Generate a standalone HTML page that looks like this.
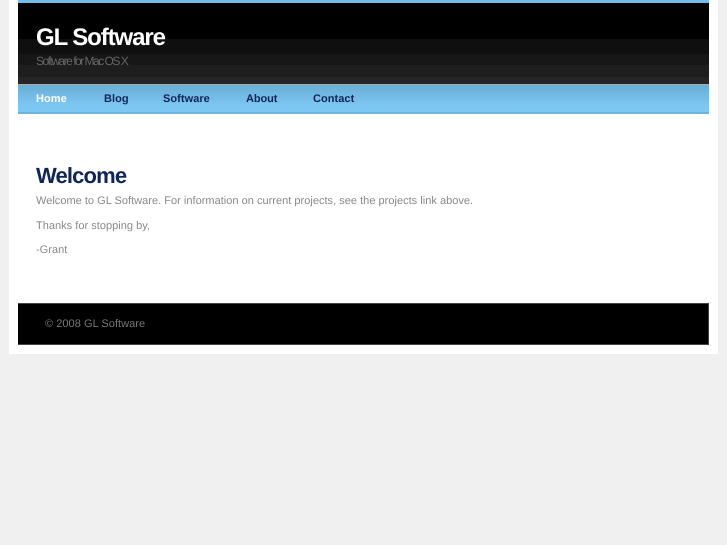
<!DOCTYPE html>
<html>
<head>
<meta charset="utf-8">
<style>
html,body{margin:0;padding:0;background:#f0f0f0;}
body{width:727px;height:545px;overflow:hidden;position:relative;font-family:"Liberation Sans",sans-serif;text-rendering:geometricPrecision;}
#wrap{position:absolute;left:9px;top:0;width:709px;height:354px;background:#fff;}
.abs{position:absolute;white-space:nowrap;}
#head{position:absolute;left:18px;top:0;width:691px;height:85px;background:#000;}
.band{position:absolute;left:0;width:691px;}
#nav{position:absolute;left:18px;top:85px;width:691px;height:27px;background:linear-gradient(#69aed6,#7cc6f2 75%,#7fc8f4);border-bottom:2px solid #6db3de;}
#foot{position:absolute;left:18px;top:303px;width:691px;height:42px;background:#000;box-sizing:border-box;border:1px solid #444;border-width:1px 1px 1px 0;}
.n{position:absolute;top:92px;font-size:11px;font-weight:bold;letter-spacing:.05px;color:#0f2557;line-height:14px;white-space:nowrap;}
.p{position:absolute;left:36px;font-size:11px;letter-spacing:.02px;color:#888;line-height:14px;white-space:nowrap;}
</style>
</head>
<body>
<div id="wrap"></div>
<div id="head">
<div class="band" style="top:0;height:3px;background:#74bdeb"></div>
<div class="band" style="top:39px;height:15px;background:#0f0f0f"></div>
<div class="band" style="top:54px;height:11px;background:#171717"></div>
<div class="band" style="top:65px;height:12px;background:#1e1e1e"></div>
<div class="band" style="top:77px;height:7px;background:#252525"></div>
<div class="band" style="top:84px;height:1px;background:#a9adb0"></div>
</div>
<div class="abs" style="left:36px;top:23px;font-size:24px;font-weight:bold;letter-spacing:-1.1px;color:#fff;line-height:30px;">GL Software</div>
<div class="abs" style="left:36px;top:54px;font-size:12px;letter-spacing:-1.5px;color:#666;line-height:15px;">Software for Mac OS X</div>
<div id="nav"></div>
<div class="n" style="left:36px;color:#fff">Home</div>
<div class="n" style="left:104px">Blog</div>
<div class="n" style="left:163px">Software</div>
<div class="n" style="left:246px;letter-spacing:-.1px">About</div>
<div class="n" style="left:313px">Contact</div>
<div class="abs" style="left:36px;top:161px;font-size:22px;font-weight:bold;letter-spacing:-.85px;color:#0f2557;line-height:30px;">Welcome</div>
<div class="p" style="top:194px">Welcome to GL Software. For information on current projects, see the projects link above.</div>
<div class="p" style="top:219px">Thanks for stopping by,</div>
<div class="p" style="top:243px">-Grant</div>
<div id="foot"></div>
<div class="abs" style="left:45px;top:317px;font-size:11px;letter-spacing:.04px;color:#777;line-height:14px;">© 2008 GL Software</div>
</body>
</html>
